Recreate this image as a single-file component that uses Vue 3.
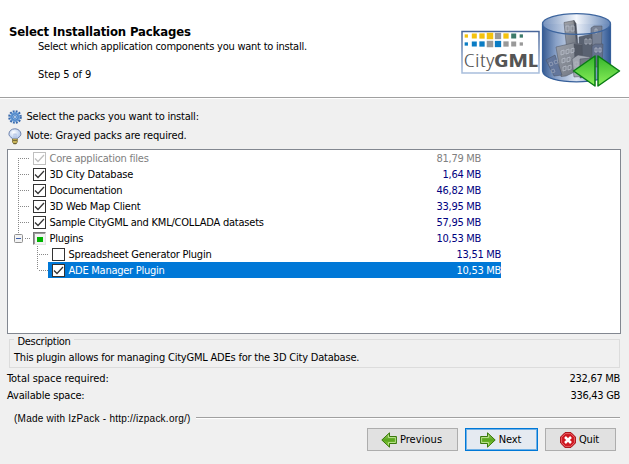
<script setup>
const packs = [
  { name: 'Core application files', size: '81,79 MB', state: 'required', w: 'a' },
  { name: '3D City Database', size: '1,64 MB', state: 'checked', w: 'b' },
  { name: 'Documentation', size: '46,82 MB', state: 'checked', w: 'c' },
  { name: '3D Web Map Client', size: '33,95 MB', state: 'checked', w: 'd' },
  { name: 'Sample CityGML and KML/COLLADA datasets', size: '57,95 MB', state: 'checked', w: 'e' },
  { name: 'Plugins', size: '10,53 MB', state: 'partial', parent: true, w: 'f' },
  { name: 'Spreadsheet Generator Plugin', size: '13,51 MB', state: 'empty', child: true, w: 'g' },
  { name: 'ADE Manager Plugin', size: '10,53 MB', state: 'checked', child: true, selected: true, w: 'h' },
]
const top = ['#f4c20d', '#f4c20d', '#f4c20d', '#f4c20d', '#999', '#f4c20d', '#3c7a6a', '#3c7a6a']
const bottom = ['#0a7cc4', '#0a7cc4', '#0a7cc4', '#999', '#0a7cc4', '#999', '#999', '#999']
const sizes = [3.3, 5, 5.3, 6.5, 6.3, 5.3, 5, 3.3]
const centers = [5.3, 13.3, 21, 29, 37, 45, 52.7, 60.3]
</script>

<template>
  <div class="window">
    <header class="header">
      <div class="heading">
        <h1>Select Installation Packages</h1>
        <p class="sub">Select which application components you want to install.</p>
        <p class="step">Step 5 of 9</p>
      </div>
      <svg class="logo" width="164" height="78" viewBox="0 0 164 78">
        <defs>
          <linearGradient id="frame" x2="0" y2="1"><stop offset="0" stop-color="#48669a" /><stop offset="1" stop-color="#a9bedc" /></linearGradient>
          <linearGradient id="cyl"><stop offset="0" stop-color="#35598f" /><stop offset=".2" stop-color="#8fa6ca" /><stop offset=".5" stop-color="#e8eef7" /><stop offset=".78" stop-color="#8da6cc" /><stop offset="1" stop-color="#2e5590" /></linearGradient>
          <linearGradient id="lid"><stop offset="0" stop-color="#7692bd" /><stop offset=".5" stop-color="#f4f7fc" /><stop offset="1" stop-color="#6384b5" /></linearGradient>
          <linearGradient id="stone" x2="1" y2="1"><stop offset="0" stop-color="#a3a5aa" /><stop offset="1" stop-color="#707379" /></linearGradient>
          <linearGradient id="arrow" x2="0" y2="1"><stop offset="0" stop-color="#35b52c" /><stop offset="1" stop-color="#8cf05a" /></linearGradient>
        </defs>
        <rect x="2" y="20.500" width="77" height="41.500" fill="#fff" stroke="url(#frame)" stroke-width="1.500" />
        <g transform="translate(1 0)">
          <rect v-for="(c, i) in top" :key="'t' + i" :x="centers[i] - sizes[i] / 2" :y="25 - sizes[i] / 2" :width="sizes[i]" :height="sizes[i]" :fill="c" />
          <rect v-for="(c, i) in bottom" :key="'b' + i" :x="centers[i] - sizes[i] / 2" :y="33 - sizes[i] / 2" :width="sizes[i]" :height="sizes[i]" :fill="c" />
        </g>
        <text x="3.500" y="56" class="city" textLength="31" lengthAdjust="spacingAndGlyphs">City</text>
        <text x="34" y="56" class="gml" textLength="44" lengthAdjust="spacingAndGlyphs">GML</text>
        <path d="M82.500 13V60c1 14.500 67 14.500 68 0V13z" fill="url(#cyl)" />
        <ellipse cx="116.500" cy="13" rx="34" ry="10.300" fill="url(#lid)" />
        <g stroke="#4b4f59" stroke-width=".5" stroke-linejoin="round">
          <path d="M104 11.500l10-2 3 30-10 1z" fill="url(#stone)" /><path d="M114 9.500l2 3 2 22-1 2z" fill="#484b53" />
          <path d="M131 17l3-2h8l-1 37h-10z" fill="#7c8494" />
          <path d="M119 26l13-3 1 42-13 2z" fill="#5c616c" />
          <path d="M132 35l3-2h8l-1 23h-10z" fill="#67718a" />
          <path d="M96 36l17-4 9 1 1 24-17 8-5 .5z" fill="url(#stone)" /><path d="M114 33l8 1 1 27-7 3z" fill="#53565e" />
          <path d="M86 49l9-5 7 20-8 1z" fill="#65779a" />
          <path d="M112 48l6-4 12 2-2 19-14 1z" fill="#a9abb0" /><path d="M120 48l10-1-2 18-8-1z" fill="#777a81" />
        </g>
        <g fill="none" stroke="#c7cad1" stroke-width=".7">
          <path d="M106 15h3v5h-3zM111 15h3v5h-3zM125 28h2v5h-2zM129 28h2v5h-2zM135 18h2v4h-2zM135 37h2v4h-2zM139 37h2v4h-2z" />
          <path d="M101 40l3-1v4l-3 1zM106 39l3-1v4l-3 1zM111 38l3-1v4l-3 1zM102 48l3-1v4l-3 1zM107 47l3-1v4l-3 1zM103 56l3-1v4l-3 1zM108 55l3-1v4l-3 1z" />
          <path d="M89 52l3-1 1 3-3 1zM94 50l3-1 1 3-3 1zM91 59l3-1 1 3-3 1zM115 51h3v4h-3z" stroke-opacity=".6" />
        </g>
        <path d="M82.500 13v47c1 14.500 67 14.500 68 0V13" fill="#4d79b8" fill-opacity=".08" stroke="#365f9a" stroke-width="1.200" />
        <ellipse cx="116.500" cy="13" rx="34" ry="10.300" fill="none" stroke="#3d659e" stroke-width="1.300" />
        <path d="M135 45V75L113.500 60zM138 45V75L159.500 60z" fill="url(#arrow)" stroke="#087b14" stroke-width="1.500" stroke-linejoin="round" />
      </svg>
    </header>

    <main class="body">
      <div class="hint first">
        <svg width="14" height="14" viewBox="0 0 14 14">
          <circle cx="7" cy="7" r="5.500" fill="none" stroke="#3869ad" stroke-width="2.600" stroke-dasharray="1.800 1.080" />
          <circle cx="7" cy="7" r="4.100" fill="#83b2e5" stroke="#6b9ed8" stroke-width="2" />
          <circle cx="7" cy="7" r="3.200" fill="none" stroke="#3f75b9" stroke-width=".8" />
          <circle cx="7" cy="7" r="1.400" fill="#eff5fc" stroke="#3f75b9" stroke-width=".8" />
        </svg>
        <span>Select the packs you want to install:</span>
      </div>
      <div class="hint second">
        <svg width="14" height="17" viewBox="0 0 14 17">
          <defs><radialGradient id="bulb" cx=".4" cy=".35"><stop offset="0" stop-color="#fff" /><stop offset="1" stop-color="#bdd0ef" /></radialGradient></defs>
          <path d="M5 11.500C4.500 9.500 .9 9 .9 6.200 .9 3 3.600.8 6.800.8S12.900 3 12.900 6.200C12.900 9 9.200 9.500 8.800 11.500z" fill="url(#bulb)" stroke="#7184ad" />
          <path d="M6 6v5M8 6v5M5.500 6h3" stroke="#9db3da" stroke-width=".6" fill="none" />
          <path d="M4.500 11h4.800v3l-1.200 1.800H5.700L4.500 14z" fill="#e4ce65" stroke="#756631" stroke-width=".8" />
          <path d="M5 12.700h4M5.500 15.300h3" stroke="#5f572f" />
        </svg>
        <span>Note: Grayed packs are required.</span>
      </div>

      <section class="packs">
        <div v-for="p in packs" :key="p.name" class="row" :class="[p.state, { child: p.child, parent: p.parent, selected: p.selected }]">
          <div class="branch">
            <svg v-if="p.parent" width="9" height="9" viewBox="0 0 9 9"><rect x=".5" y=".5" width="8" height="8" rx="1" fill="#f3f3f3" stroke="#919191" /><path d="M2 4.500h5" stroke="#3c5faa" /></svg>
            <i v-else class="stem"></i>
            <i class="twig"></i>
          </div>
          <div class="entry">
            <span class="box">
              <svg v-if="p.state === 'checked' || p.state === 'required'" width="11" height="11" viewBox="0 0 11 11"><path d="M1 5.500l3 3 6-6.500" fill="none" stroke="currentColor" stroke-width="1.250" /></svg>
              <b v-if="p.state === 'partial'"></b>
            </span>
            <span class="name" :class="'n-' + p.w">{{ p.name }}</span>
            <span class="size">{{ p.size }}</span>
          </div>
        </div>
      </section>

      <fieldset class="description">
        <legend>Description</legend>
        <p>This plugin allows for managing CityGML ADEs for the 3D City Database.</p>
      </fieldset>
      <div class="total required-space"><span>Total space required:</span><span class="num">232,67 MB</span></div>
      <div class="total available-space"><span>Available space:</span><span class="num">336,43 GB</span></div>
    </main>

    <footer>
      <div class="made"><span>(Made with IzPack - http://izpack.org/)</span><i></i></div>
      <nav class="buttons">
        <button class="previous">
          <svg width="16" height="16" viewBox="0 0 16 16"><defs><linearGradient id="leaf" x2="0" y2="1"><stop offset="0" stop-color="#a4cf6c" /><stop offset=".5" stop-color="#57a51c" /><stop offset="1" stop-color="#9edc48" /></linearGradient></defs><path d="M8.500.8V4.500H15.400V11.500H8.500V15.200L.8 8z" fill="url(#leaf)" stroke="#39790d" /><path d="M7.500 3.200v2.300h6.900v5H7.500v2.300" fill="none" stroke="#c7e9a0" stroke-width=".8" /></svg>
          <span>Previous</span>
        </button>
        <button class="next">
          <svg width="16" height="16" viewBox="0 0 16 16"><path d="M7.500.8V4.500H.6V11.500H7.500V15.200L15.200 8z" fill="url(#leaf)" stroke="#39790d" /><path d="M8.500 3.200v2.300H1.600v5h6.900v2.300" fill="none" stroke="#c7e9a0" stroke-width=".8" /></svg>
          <span>Next</span>
        </button>
        <button class="quit">
          <svg width="16" height="16" viewBox="0 0 16 16"><path d="M5 .6h6L15.400 5v6L11 15.400H5L.6 11V5z" fill="#cf1720" stroke="#a80d13" /><path d="M5.300 1.600h5.400l3.700 3.700v5.400l-3.700 3.700H5.300l-3.700-3.700V5.300z" fill="none" stroke="#ec7478" stroke-width=".8" /><path d="M5 5l6 6M11 5l-6 6" stroke="#fff" stroke-width="2.500" /></svg>
          <span>Quit</span>
        </button>
      </nav>
    </footer>
  </div>
</template>

<style>
body { background: #f0f0f0; overflow: hidden; }
</style>
<style scoped>
* { box-sizing: border-box; }
.window { width: 629px; height: 464px; background: #f0f0f0; color: #000; font: 11px/16px "DejaVu Sans Condensed", "DejaVu Sans", sans-serif; font-stretch: condensed; letter-spacing: -.24px; white-space: nowrap; overflow: hidden; }
h1, p { margin: 0; }
.header { height: 99px; background: #fff; border-bottom: 1px solid #fff; box-shadow: inset 0 -1px #a0a0a0; display: flex; justify-content: space-between; padding: 11px 5px 0 9px; }
.heading { padding-top: 12px; }
h1 { font-size: 13px; line-height: 17px; font-weight: bold; letter-spacing: -.15px; }
.sub, .step { padding-left: 29px; line-height: 14px; }
.step { margin-top: 14px; letter-spacing: -.08px; }
.city, .gml { font-family: "Open Sans", sans-serif; font-size: 18.5px; fill: #555; letter-spacing: 0; }
.city { font-weight: 300; }
.gml { font-weight: 700; }
.body { padding: 8px 8px 0 7px; }
.hint { display: flex; align-items: center; gap: 4.5px; height: 19px; padding-left: 1px; }
.first { letter-spacing: -.2px; }
.second { height: 20px; letter-spacing: -.14px; }
.packs { height: 185px; margin-top: 3px; border: 1px solid #828790; background: #fff; width: 614px; }
.row { display: flex; height: 16px; }
.branch { width: 25px; display: flex; align-items: center; padding-left: 10px; }
.stem { width: 1px; height: 16px; background: repeating-linear-gradient(#888 0 1px, transparent 1px 2px); }
.twig { width: 11px; height: 1px; background: repeating-linear-gradient(90deg, transparent 0 1px, #888 1px 2px); }
.required .stem { height: 8px; align-self: flex-end; }
.parent .branch { padding-left: 6px; background: repeating-linear-gradient(#888 0 1px, transparent 1px 2px) 10px 0 / 1px 4px no-repeat; }
.parent .twig { width: 6px; margin-left: 1px; }
.child .branch { width: 40px; padding-left: 29px; }
.selected .stem { height: 8px; align-self: flex-start; }
.entry { display: flex; align-items: center; width: 448px; }
.child .entry { width: 453px; padding-left: 4px; }
.box { width: 13px; height: 13px; border: 1px solid #333; background: #fff; color: #333; margin-right: 3.5px; display: flex; flex: none; }
.required .box { border-color: #bfbfbf; color: #bfbfbf; }
.partial .box { border-color: #7a7a7a #e4e4e4 #e4e4e4 #7a7a7a; box-shadow: inset 1px 1px #999; background: #f3f3f3; padding: 4px 0 0 3px; }
.partial b { width: 6px; height: 5px; background: #00b500; }
.name, .size { height: 16px; line-height: 18px; }
.n-a { letter-spacing: -.22px; }
.n-b { letter-spacing: -.2px; }
.n-c { letter-spacing: -.28px; }
.n-d { letter-spacing: -.2px; }
.n-e, .n-g { letter-spacing: -.22px; }
.n-h { letter-spacing: -.25px; }
.size { margin-left: auto; color: #000080; letter-spacing: -.3px; }
.required { color: #808080; }
.required .size { color: #808080; }
.selected .entry { background: #0078d7; color: #fff; }
.selected .size { color: #fff; }
.description { margin: 0 2px 0; padding: 0 0 0 4px; width: 611px; height: 34px; border: 1px solid #dcdcdc; min-width: 0; }
legend { padding: 0 3px 0 3.5px; height: 11px; line-height: 15px; letter-spacing: -.3px; }
.description p { line-height: 16px; margin-top: 5px; letter-spacing: -.21px; }
.total { display: flex; justify-content: space-between; height: 17px; line-height: 17px; padding-right: 1px; }
.description + .total { margin-top: 2px; }
.required-space { letter-spacing: -.06px; }
.available-space { letter-spacing: -.17px; }
.num { letter-spacing: -.3px; }
footer { padding: 7px 9px 0 14px; }
.made { display: flex; align-items: center; height: 16px; font-family: "Liberation Sans", sans-serif; font-size: 10px; letter-spacing: .24px; }
.made i { flex: 1; height: 2px; margin: -2px 0 0 5px; background: #fff; border-top: 1px solid #a0a0a0; }
.buttons { display: flex; justify-content: flex-end; gap: 7px; margin-top: 1px; padding-right: 4px; }
button { height: 23px; padding: 0; border: 1px solid #adadad; background: #e1e1e1; font: inherit; letter-spacing: -.15px; color: #000; display: flex; align-items: center; justify-content: center; gap: 3px; }
.previous { width: 91px; padding-right: 2px; }
.next { width: 73px; border: 1px solid #0078d7; box-shadow: inset 0 0 0 1px #70b1e6; background: #e5eaf1; padding-right: 2px; }
.quit { width: 71px; padding-right: 2px; }
.previous span { letter-spacing: .05px; }
</style>
